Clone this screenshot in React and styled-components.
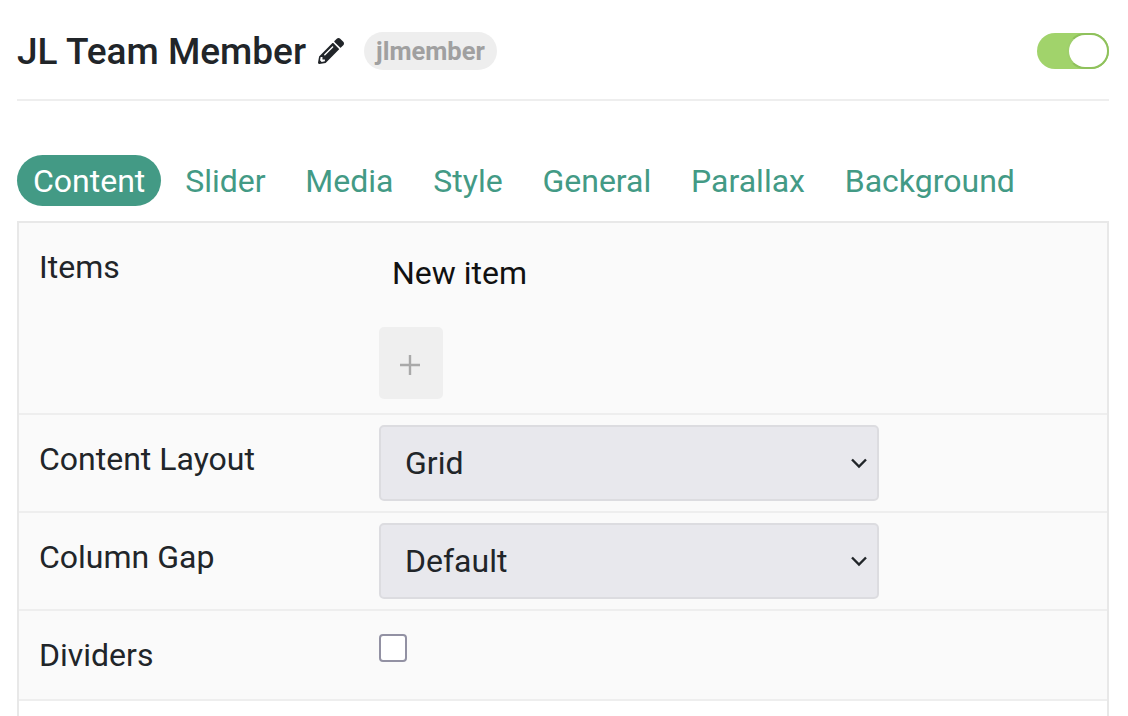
import React from "react";
import styled, { createGlobalStyle } from "styled-components";
import { FaPencilAlt } from "react-icons/fa";

const Global = createGlobalStyle`
  html, body { margin: 0; padding: 0; background: #fff; overflow: hidden; }
  * { box-sizing: border-box; }
  body { font-family: Roboto, "Liberation Sans", sans-serif; color: #212529; }
`;
const Page = styled.div`
  width: 1128px; height: 716px; overflow: hidden;
  padding: 0 19px 0 17px;
`;
const Header = styled.header`
  height: 101px; display: flex; align-items: center;
  border-bottom: 2px solid #eeeeee;
  padding-top: 2px;
`;
const HeaderInner = styled.div`
  flex: 1; display: flex; align-items: center; height: 100%;
`;
const Title = styled.h1`
  margin: 2px 0 0; font-size: 37px; font-weight: 500; line-height: 40px; color: #212529;
`;
const Pencil = styled(FaPencilAlt)`
  width: 26px; height: 26px; margin-left: 12px; color: #212529;
`;
const Slug = styled.span`
  margin-left: 20px; height: 38px; padding: 0 12px; border-radius: 19px;
  background: #eeeeee; color: #a0a0a0; font-size: 25.5px; font-weight: 700;
  display: flex; align-items: center;
`;
const Toggle = styled.span`
  margin-left: auto; width: 72px; height: 36px; border-radius: 18px;
  background: #a1d36b; position: relative; display: block;
`;
const Knob = styled.span`
  position: absolute; right: 0; top: 0; width: 42px; height: 36px; border-radius: 18px;
  background: #fff; border: 2px solid #8fc15c; border-left-color: #9fcf6c;
`;
const Tabs = styled.nav`
  display: flex; margin-top: 54px; height: 51px; gap: 7.8px;
`;
const Tab = styled.span`
  height: 51px; padding: 1px 16px 0; border-radius: 26px; font-size: 32px; line-height: 51px;
  color: ${p => (p.$active ? "#fff" : "#439a85")};
  background: ${p => (p.$active ? "#439a85" : "transparent")};
`;
const Table = styled.section`
  margin-top: 15px; border: 2px solid #e8e8e8; border-bottom: 0; height: 520px;
`;
const Row = styled.div`
  display: grid; grid-template-columns: 360px 1fr;
  height: ${p => p.$h}px; background: #fafafa; border-bottom: 2px solid #eeeeee;
`;
const Label = styled.div`
  font-size: 32px; line-height: 40px; padding: 24px 0 0 20px; color: #212529;
`;
const Field = styled.div`
  display: flex; flex-direction: column; align-items: flex-start; padding-top: ${p => p.$top}px;
`;
const ItemText = styled.div`
  font-size: 32px; line-height: 40px; padding-left: 13px; color: #111;
`;
const AddButton = styled.button`
  margin-top: 34px; width: 64px; height: 72px; border: 0; border-radius: 5px;
  background: #efefef; display: flex; align-items: center; justify-content: center;
  padding: 4px 3px 0 0;
`;
const SelectWrap = styled.div`
  position: relative; width: 500px; height: 76px;
`;
const Select = styled.select`
  appearance: none; width: 100%; height: 100%; border: 2px solid #dcdce0; border-radius: 5px;
  background: #e8e8ed; font: 400 32px Roboto, sans-serif; color: #212529;
  padding: 0 0 0 24px; margin: 0; outline: 0;
`;
const Chevron = styled.svg`
  position: absolute; right: 11px; top: 32px; width: 18px; height: 12px; pointer-events: none;
`;
const Check = styled.input`
  appearance: none; margin: 0; width: 28px; height: 28px; background: #fff;
  border: 2px solid #9291a3; border-radius: 4px;
`;

const tabs = ["Content", "Slider", "Media", "Style", "General", "Parallax", "Background"];

const Dropdown = ({ value }) => (
  <SelectWrap>
    <Select defaultValue={value}><option>{value}</option></Select>
    <Chevron viewBox="0 0 18 12"><path d="M2 2.500 9 9.500l7-7" fill="none" stroke="#212529" strokeWidth="2.400" /></Chevron>
  </SelectWrap>
);

export default function App() {
  return (
    <Page>
      <Global />
      <Header>
        <HeaderInner>
          <Title>JL Team Member</Title>
          <Pencil />
          <Slug>jlmember</Slug>
          <Toggle><Knob /></Toggle>
        </HeaderInner>
      </Header>
      <Tabs>
        {tabs.map((t, i) => <Tab key={t} $active={i === 0}>{t}</Tab>)}
      </Tabs>
      <Table>
        <Row $h={192}>
          <Label>Items</Label>
          <Field $top={30}>
            <ItemText>New item</ItemText>
            <AddButton aria-label="Add">
              <svg width="20" height="20" viewBox="0 0 20 20"><path d="M10 0v20M0 10h20" stroke="#a9a9a9" strokeWidth="2.400" /></svg>
            </AddButton>
          </Field>
        </Row>
        <Row $h={98}>
          <Label>Content Layout</Label>
          <Field $top={10}><Dropdown value="Grid" /></Field>
        </Row>
        <Row $h={98}>
          <Label>Column Gap</Label>
          <Field $top={10}><Dropdown value="Default" /></Field>
        </Row>
        <Row $h={90}>
          <Label>Dividers</Label>
          <Field $top={23}><Check type="checkbox" /></Field>
        </Row>
      </Table>
    </Page>
  );
}
